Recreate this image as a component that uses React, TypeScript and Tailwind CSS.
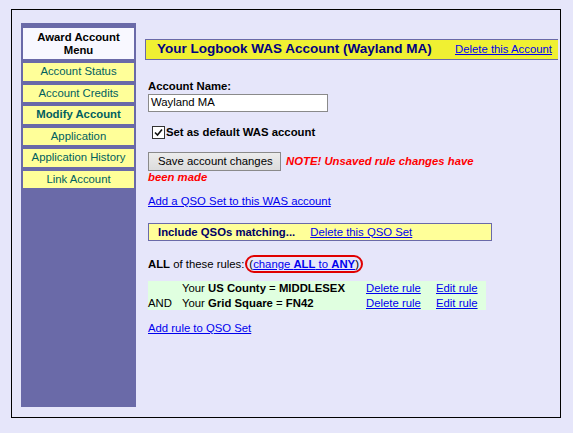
import * as React from "react";

const menu = [
  { label: "Account Status" },
  { label: "Account Credits" },
  { label: "Modify Account", bold: true },
  { label: "Application" },
  { label: "Application History" },
  { label: "Link Account" },
];

function Link({ children }: { children: React.ReactNode }) {
  return <a className="text-[#0000ee] underline cursor-pointer">{children}</a>;
}

function CheckBox() {
  return (
    <span className="w-[13px] h-[13px] border border-[#333] bg-white flex items-center justify-center">
      <svg width="9" height="9" viewBox="0 0 9 9">
        <path d="M1 4.5 L3.5 7 L8 1.5" fill="none" stroke="#111" strokeWidth="1.6" />
      </svg>
    </span>
  );
}

export default function App() {
  return (
    <div className="min-h-[433px] bg-[#e6e6fa] pt-[9px] pl-[11px] font-['Liberation_Sans',Arial,sans-serif] text-[11.33px] text-black">
      <div className="w-[550px] h-[409px] border border-black flex pt-[13px] pb-[10px] pl-[9px] pr-[2px]">
        {/* left menu */}
        <div className="w-[115px] bg-[#6a6aa8] px-[2px] pt-[5px] flex flex-col gap-[4px]">
          <div className="bg-[#f8f8ff] h-[31px] flex items-center justify-center text-center font-bold leading-[13px]">
            Award Account
            <br />
            Menu
          </div>
          {menu.map((m) => (
            <div
              key={m.label}
              className={
                "h-[17.5px] flex items-center justify-center bg-[#ffff99] text-[#006060] " +
                (m.bold ? "font-bold" : "")
              }
            >
              {m.label}
            </div>
          ))}
        </div>

        {/* main */}
        <div className="flex-1 ml-[9px] pt-[16px]">
          <div className="h-[21px] bg-[#f0f032] border-y border-l border-[#6a6aa8] flex items-center justify-between pl-[11px] pr-[6px]">
            <span className="text-[13.5px] font-bold text-[#000080]">
              Your Logbook WAS Account (Wayland MA)
            </span>
            <Link>Delete this Account</Link>
          </div>

          <div className="pl-[3px] w-[347px]">
            <div className="mt-[20px] font-bold leading-[13px]">Account Name:</div>
            <div className="mt-[1px] w-[180px] h-[18px] border border-[#8a8a8a] bg-white px-[2px] flex items-center leading-none">
              Wayland MA
            </div>

            <div className="mt-[13px] h-[14px] flex items-center pl-[4px] gap-[1px]">
              <CheckBox />
              <span className="font-bold">Set as default WAS account</span>
            </div>

            <div className="mt-[13px] flex items-center h-[19px]">
              <button className="w-[133px] h-[19px] border border-[#8a8a8a] bg-gradient-to-b from-[#ececec] to-[#dcdcdc] text-left pl-[9px] leading-none">
                Save account changes
              </button>
              <span className="ml-[5px] text-[#ff0000] font-bold italic">
                NOTE! Unsaved rule changes have
              </span>
            </div>
            <div className="mt-[-1px] leading-[14px] text-[#ff0000] font-bold italic">
              been made
            </div>

            <div className="mt-[10px] leading-[14px]">
              <Link>Add a QSO Set to this WAS account</Link>
            </div>

            <div className="mt-[15px] h-[18px] w-[344px] border border-[#6a6aa8] bg-[#ffff99] flex items-center pl-[9px]">
              <span className="font-bold text-[#000066]">Include QSOs matching...</span>
              <span className="ml-[15px]">
                <Link>Delete this QSO Set</Link>
              </span>
            </div>

            <div className="mt-[14px] h-[18px] flex items-center">
              <span>
                <b>ALL</b> of these rules:
              </span>
              <span className="ml-[1px] h-[18px] border-2 border-[#e00000] rounded-[9px] px-[2px] flex items-center">
                (
                <a className="text-[#0000ee] underline cursor-pointer">
                  change <b>ALL</b> to <b>ANY</b>
                </a>
                )
              </span>
            </div>

            <div className="mt-[8px] w-[338px] bg-[#e0ffe0] grid grid-cols-[34px_184px_70px_50px] leading-[14.5px]">
              <span></span>
              <span>
                Your <b>US County</b> = <b>MIDDLESEX</b>
              </span>
              <Link>Delete rule</Link>
              <Link>Edit rule</Link>
              <span>AND</span>
              <span>
                Your <b>Grid Square</b> = <b>FN42</b>
              </span>
              <Link>Delete rule</Link>
              <Link>Edit rule</Link>
            </div>

            <div className="mt-[11px] leading-[14px]">
              <Link>Add rule to QSO Set</Link>
            </div>
          </div>
        </div>
      </div>
    </div>
  );
}
